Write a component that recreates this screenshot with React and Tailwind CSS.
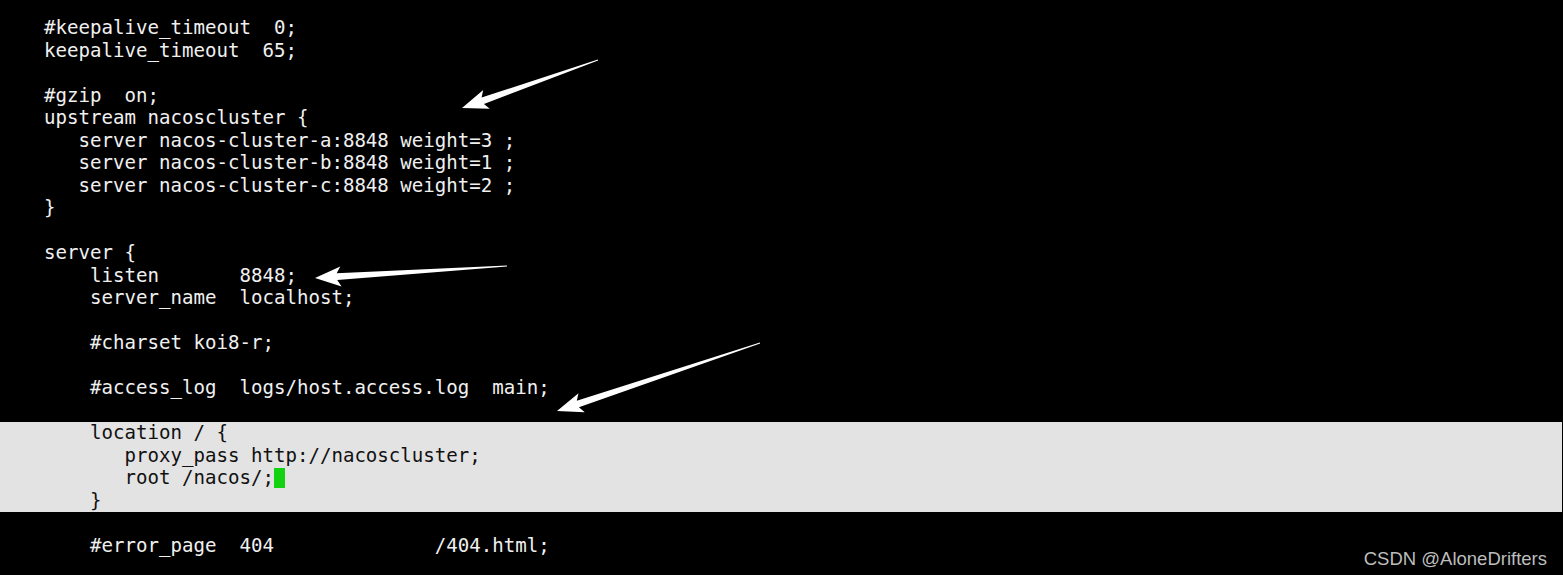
import React from "react";

const lines = [
  { t: "#keepalive_timeout  0;" },
  { t: "keepalive_timeout  65;" },
  { t: "" },
  { t: "#gzip  on;" },
  { t: "upstream nacoscluster {" },
  { t: "   server nacos-cluster-a:8848 weight=3 ;" },
  { t: "   server nacos-cluster-b:8848 weight=1 ;" },
  { t: "   server nacos-cluster-c:8848 weight=2 ;" },
  { t: "}" },
  { t: "" },
  { t: "server {" },
  { t: "    listen       8848;" },
  { t: "    server_name  localhost;" },
  { t: "" },
  { t: "    #charset koi8-r;" },
  { t: "" },
  { t: "    #access_log  logs/host.access.log  main;" },
  { t: "" },
  { t: "    location / {", hl: true },
  { t: "       proxy_pass http://nacoscluster;", hl: true },
  { t: "       root /nacos/;", hl: true, cursor: true },
  { t: "    }", hl: true },
  { t: "" },
  { t: "    #error_page  404              /404.html;" },
];

function arrowPoints(tip, tail, headLen = 22, headHalf = 10, baseHalf = 3.4, tailHalf = 0.4) {
  const dx = tail[0] - tip[0];
  const dy = tail[1] - tip[1];
  const len = Math.hypot(dx, dy);
  const ux = dx / len, uy = dy / len;
  const nx = -uy, ny = ux;
  const bx = tip[0] + ux * headLen, by = tip[1] + uy * headLen;
  const back = 4;
  const pts = [
    [tip[0], tip[1]],
    [bx + ux * back + nx * headHalf, by + uy * back + ny * headHalf],
    [bx + nx * baseHalf, by + ny * baseHalf],
    [tail[0] + nx * tailHalf, tail[1] + ny * tailHalf],
    [tail[0] - nx * tailHalf, tail[1] - ny * tailHalf],
    [bx - nx * baseHalf, by - ny * baseHalf],
    [bx + ux * back - nx * headHalf, by + uy * back - ny * headHalf],
  ];
  return pts.map((p) => p[0].toFixed(1) + "," + p[1].toFixed(1)).join(" ");
}

export default function App() {
  return (
    <div className="relative w-[1563px] h-[575px] bg-black overflow-hidden">
      <div
        className="pt-[17px] text-[19.1px] leading-[22.5px]"
        style={{ fontFamily: '"DejaVu Sans Mono", "Liberation Mono", monospace' }}
      >
        {lines.map((l, i) => (
          <div
            key={i}
            className={
              "h-[22.5px] w-[1562px] pl-[44px] whitespace-pre flex items-center " +
              (l.hl ? "bg-[#e3e3e3] text-[#111111]" : "text-[#f0f0f0]")
            }
          >
            <span>{l.t}</span>
            {l.cursor && <span className="inline-block w-[11.5px] h-[20px] bg-[#12d212]" />}
          </div>
        ))}
      </div>

      <svg className="absolute inset-0" width="1563" height="575" viewBox="0 0 1563 575">
        <polygon points={arrowPoints([462, 108], [598, 60])} fill="#ffffff" />
        <polygon points={arrowPoints([315, 278], [507, 266])} fill="#ffffff" />
        <polygon points={arrowPoints([557, 411], [760, 343])} fill="#ffffff" />
      </svg>

      <div
        className="absolute right-[16px] bottom-[7px] text-[18.5px] leading-none text-[#bdbdbd]"
        style={{ fontFamily: '"Liberation Sans", Arial, sans-serif' }}
      >
        CSDN @AloneDrifters
      </div>
    </div>
  );
}
